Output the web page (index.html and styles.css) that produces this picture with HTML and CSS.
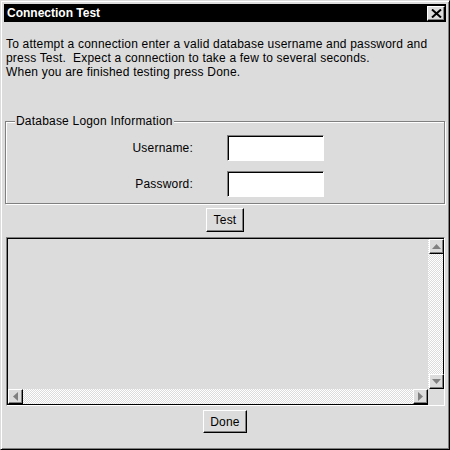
FILE: index.html
```html
<!DOCTYPE html>
<html>
<head>
<meta charset="utf-8">
<link rel="stylesheet" href="styles.css">
</head>
<body>
<div class="window">
  <div class="titlebar">
    <span class="title">Connection Test</span>
    <div class="close">
      <svg width="11" height="9" viewBox="0 0 11 9"><path d="M1 0.5 L10 8.5 M10 0.5 L1 8.5" stroke="#000" stroke-width="2"/></svg>
    </div>
  </div>
  <p class="intro">To attempt a connection enter a valid database username and password and<br>press Test.&nbsp; Expect a connection to take a few to several seconds.<br>When you are finished testing press Done.</p>
  <div class="group">
    <span class="group-title">Database Logon Information</span>
    <div class="form">
      <label class="lbl">Username:</label>
      <input class="field" type="text">
      <label class="lbl">Password:</label>
      <input class="field" type="password">
    </div>
  </div>
  <button class="btn btn-test">Test</button>
  <div class="pane">
    <div class="textarea"></div>
    <div class="vscroll">
      <div class="arrow"><svg width="9" height="5" viewBox="0 0 9 5"><path d="M4.5 0 L9 5 L0 5 Z" fill="#808080"/></svg></div>
      <div class="track"></div>
      <div class="arrow"><svg width="9" height="5" viewBox="0 0 9 5"><path d="M0 0 L9 0 L4.5 5 Z" fill="#808080"/></svg></div>
    </div>
    <div class="hscroll">
      <div class="arrow"><svg width="5" height="9" viewBox="0 0 5 9"><path d="M5 0 L5 9 L0 4.5 Z" fill="#808080"/></svg></div>
      <div class="track"></div>
      <div class="arrow"><svg width="5" height="9" viewBox="0 0 5 9"><path d="M0 0 L5 4.5 L0 9 Z" fill="#808080"/></svg></div>
    </div>
    <div class="corner"></div>
  </div>
  <button class="btn btn-done">Done</button>
</div>
</body>
</html>
```

FILE: styles.css
```css
html, body {
  margin: 0;
  padding: 0;
  background: #dcdcdc;
}
body {
  font-family: "Liberation Sans", Arial, sans-serif;
  font-size: 12px;
  letter-spacing: 0.2px;
  color: #000;
}
.window {
  width: 450px;
  height: 450px;
  box-sizing: border-box;
  border: 1px solid;
  border-color: #dcdcdc #000 #000 #dcdcdc;
  box-shadow: inset 1px 1px 0 #fff, inset -1px -1px 0 #808080;
  padding: 3px;
  display: flex;
  flex-direction: column;
  background: #dcdcdc;
}
.titlebar {
  height: 18px;
  background: #000;
  display: flex;
  align-items: center;
  justify-content: space-between;
  padding: 0 1px 0 3px;
}
.title {
  color: #fff;
  font-weight: bold;
  font-size: 12px;
  letter-spacing: 0;
  line-height: 14px;
}
.close {
  width: 18px;
  height: 15px;
  box-sizing: border-box;
  background: #dcdcdc;
  border: 1px solid;
  border-color: #fff #000 #000 #fff;
  box-shadow: inset -1px -1px 0 #808080;
  display: flex;
  align-items: center;
  justify-content: center;
}
.close svg { display: block; }
.intro {
  margin: 15px 0 0 0;
  padding-left: 2px;
  line-height: 14px;
}
.group {
  position: relative;
  margin: 42px 1px 0 1px;
  border: 1px solid #808080;
  box-shadow: inset 1px 1px 0 #fff, 1px 1px 0 #fff;
  padding: 13px 0 6px 0;
}
.group-title {
  position: absolute;
  top: -8px;
  left: 9px;
  padding: 0 1px;
  background: #dcdcdc;
  line-height: 14px;
}
.form {
  display: grid;
  grid-template-columns: 187px 97px;
  column-gap: 34px;
  row-gap: 10px;
  align-items: center;
}
.lbl {
  text-align: right;
  line-height: 14px;
}
.field {
  width: 97px;
  height: 26px;
  box-sizing: border-box;
  margin: 0;
  padding: 0 3px;
  background: #fff;
  border: 1px solid;
  border-color: #808080 #fff #fff #808080;
  box-shadow: inset 1px 1px 0 #000;
  outline: none;
  font: inherit;
}
.btn {
  align-self: center;
  margin: 0;
  padding: 0;
  font: inherit;
  letter-spacing: 0.2px;
  color: #000;
  background: #dcdcdc;
  border: 1px solid;
  border-color: #fff #000 #000 #fff;
  box-shadow: inset -1px -1px 0 #808080;
  box-sizing: border-box;
}
.btn-test {
  margin-top: 4px;
  width: 38px;
  height: 24px;
}
.btn-done {
  margin-top: 4px;
  width: 44px;
  height: 23px;
}
.pane {
  margin: 5px 1px 0 2px;
  height: 169px;
  box-sizing: border-box;
  border: 1px solid;
  border-color: #808080 #fff #fff #808080;
  box-shadow: inset 1px 1px 0 #000;
  padding: 1px 0 0 1px;
  display: grid;
  grid-template-columns: 1fr 16px;
  grid-template-rows: 1fr 16px;
}
.textarea {
  background: #dcdcdc;
}
.vscroll, .hscroll {
  display: flex;
  background-image: conic-gradient(#fff 25%, #dcdcdc 0 50%, #fff 0 75%, #dcdcdc 0);
  background-size: 2px 2px;
}
.vscroll {
  flex-direction: column;
  border-right: 1px solid #000;
}
.hscroll {
  flex-direction: row;
  border-bottom: 1px solid #000;
}
.track { flex: 1; }
.arrow {
  width: 15px;
  height: 15px;
  box-sizing: border-box;
  background: #dcdcdc;
  border: 1px solid;
  border-color: #fff #000 #000 #fff;
  box-shadow: inset -1px -1px 0 #808080;
  display: flex;
  align-items: center;
  justify-content: center;
  flex: none;
}
.vscroll .arrow { margin-left: 1px; }
.arrow svg { display: block; }
.corner { background: #dcdcdc; }
```
